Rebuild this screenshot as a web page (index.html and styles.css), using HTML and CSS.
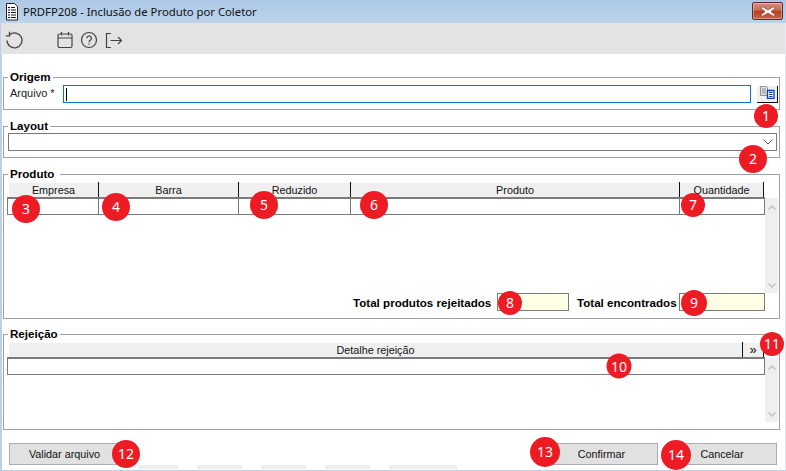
FILE: index.html
```html
<!DOCTYPE html>
<html lang="pt">
<head>
<meta charset="utf-8">
<title>PRDFP208 - Inclusão de Produto por Coletor</title>
<link rel="stylesheet" href="styles.css">
</head>
<body>
<div class="window">
  <header class="titlebar">
    <svg class="doc-icon" width="16" height="18" viewBox="0 0 16 18"><path d="M2.500 .5h8l3 3v13.500h-11z" fill="#fff" stroke="#222"/><path d="M4 4h2v1H4zM7 4h4v1H7zM4 6.500h2v1H4zM7 6.500h5v1H7zM4 9h2v1H4zM7 9h5v1H7zM4 11.500h2v1H4zM7 11.500h5v1H7zM4 14h2v1H4zM7 14h5v1H7z" fill="#111"/></svg>
    <span class="title">PRDFP208 - Inclusão de Produto por Coletor</span>
    <button class="close" aria-label="Fechar"><svg width="16" height="11" viewBox="0 0 16 11"><path d="M2.500 .8 8 3.800 13.500 .8 15.300 2 11 5.500 15.300 9 13.500 10.200 8 7.200 2.500 10.200 .7 9 5 5.500 .7 2z" fill="#f7f3f2" stroke="#7b3a34" stroke-width=".6"/></svg></button>
  </header>
  <nav class="toolbar">
    <svg class="tool tool-undo" width="18" height="18" viewBox="0 0 18 18" fill="none" stroke="#444" stroke-width="1.300"><path d="M4.800 3.500A7.500 7.500 0 1 1 2 9.500"/><path d="M4.500 .8v4H.8"/></svg>
    <svg class="tool tool-cal" width="18" height="18" viewBox="0 0 18 18" fill="none" stroke="#444" stroke-width="1.200"><rect x="2" y="3" width="14" height="13.500" rx="1.500"/><path d="M2 7h14M5.500 1v3.500M12.500 1v3.500"/></svg>
    <svg class="tool tool-help" width="18" height="18" viewBox="0 0 18 18" fill="none" stroke="#444" stroke-width="1.200"><circle cx="9" cy="9" r="7.500"/><path d="M6.800 7.200a2.300 2.300 0 1 1 3.500 2c-.9.500-1.300 1-1.300 2"/><path d="M9 12.500v1.200"/></svg>
    <svg class="tool tool-exit" width="18" height="18" viewBox="0 0 18 18" fill="none" stroke="#444" stroke-width="1.200"><path d="M6 2.500H1.500v14H6"/><path d="M5.500 9.500h11M13 6l3.500 3.500L13 13"/></svg>
  </nav>
  <main class="content">
    <fieldset class="group group-origem">
      <legend>Origem</legend>
      <div class="file-row">
        <label class="file-label">Arquivo *</label>
        <div class="file-input"><span class="caret"></span></div>
        <button class="file-btn" aria-label="Selecionar arquivo">
          <svg width="15" height="13" viewBox="0 0 15 13"><path d="M.5.500h6l1 1v8h-7z" fill="#e4e4e4" stroke="#8f8f8f"/><path d="M2 3h4M2 5h4M2 7h4" stroke="#8f8f8f"/><path d="M7.500 4.500h6.500v8h-6.500z" fill="#fff" stroke="#0b3fc0" stroke-width="1.300"/><path d="M9 6.500h3.500M9 8.500h3.500M9 10.500h3.500" stroke="#0b3fc0"/></svg>
        </button>
      </div>
    </fieldset>
    <fieldset class="group group-layout">
      <legend>Layout</legend>
      <div class="combo"><svg width="10" height="6" viewBox="0 0 10 6" fill="none" stroke="#555"><path d="M.5.500 5 5 9.500.500"/></svg></div>
    </fieldset>
    <fieldset class="group group-produto">
      <legend>Produto</legend>
      <div class="grid-area grid-area-produto">
        <div class="grid">
          <div class="grid-head cols-produto">
            <div>Empresa</div><div>Barra</div><div>Reduzido</div><div>Produto</div><div>Quantidade</div>
          </div>
          <div class="grid-row cols-row">
            <div></div><div></div><div></div><div></div><div></div>
          </div>
        </div>
        <div class="scrollbar">
          <svg width="8" height="5" viewBox="0 0 8 5" fill="none" stroke="#c4c4c4" stroke-width="1.500"><path d="M.5 4.500 4 1l3.500 3.500"/></svg>
          <svg width="8" height="5" viewBox="0 0 8 5" fill="none" stroke="#c4c4c4" stroke-width="1.500"><path d="M.5.500 4 4 7.500.500"/></svg>
        </div>
      </div>
      <div class="totals">
        <strong class="total-label">Total produtos rejeitados</strong>
        <div class="total-box total-box-a"></div>
        <strong class="total-label">Total encontrados</strong>
        <div class="total-box total-box-b"></div>
      </div>
    </fieldset>
    <fieldset class="group group-rejeicao">
      <legend>Rejeição</legend>
      <div class="grid-area grid-area-rejeicao">
        <div class="grid">
          <div class="grid-head cols-rejeicao">
            <div>Detalhe rejeição</div><div class="more">»</div>
          </div>
          <div class="grid-row"></div>
        </div>
        <div class="scrollbar">
          <svg width="8" height="5" viewBox="0 0 8 5" fill="none" stroke="#c4c4c4" stroke-width="1.500"><path d="M.5 4.500 4 1l3.500 3.500"/></svg>
          <svg width="8" height="5" viewBox="0 0 8 5" fill="none" stroke="#c4c4c4" stroke-width="1.500"><path d="M.5.500 4 4 7.500.500"/></svg>
        </div>
      </div>
    </fieldset>
    <footer class="actions">
      <button class="btn btn-validar">Validar arquivo</button>
      <span class="spacer"></span>
      <button class="btn btn-confirmar">Confirmar</button>
      <button class="btn btn-cancelar">Cancelar</button>
    </footer>
    <div class="tabs">
      <span class="tab tab-a"></span><span class="tab tab-b"></span><span class="tab tab-b"></span><span class="tab tab-b"></span><span class="tab tab-c"></span>
    </div>
  </main>
  <span class="badge b1">1</span>
  <span class="badge b2">2</span>
  <span class="badge b3">3</span>
  <span class="badge b4">4</span>
  <span class="badge b5">5</span>
  <span class="badge b6">6</span>
  <span class="badge b7">7</span>
  <span class="badge b8">8</span>
  <span class="badge b9">9</span>
  <span class="badge b10">10</span>
  <span class="badge b11">11</span>
  <span class="badge b12">12</span>
  <span class="badge b13">13</span>
  <span class="badge b14">14</span>
</div>
</body>
</html>
```
FILE: styles.css
```css
* { box-sizing: border-box; }
html, body { margin: 0; padding: 0; background: #fff; overflow: hidden; }
body { font: 11px/13px "Liberation Sans", Arial, sans-serif; color: #111; }
button { font: inherit; color: inherit; margin: 0; }

.window {
  position: relative;
  width: 786px;
  height: 471px;
  display: flex;
  flex-direction: column;
  background: #fff;
  border-bottom: 1px solid #b9d1ea;
}

.titlebar {
  height: 23px;
  flex: none;
  display: flex;
  align-items: center;
  padding: 0 3px;
  background: linear-gradient(#adc8e6, #bcd3ea);
}
.doc-icon { flex: none; margin: 1px 3px 0 1px; }
.title { font: 11.300px/16px "Noto Sans", sans-serif; color: #111; }
.close {
  margin: -1px 0 0 auto;
  width: 31px;
  height: 18px;
  padding: 0;
  display: flex;
  align-items: center;
  justify-content: center;
  border: 1px solid #5a2a2a;
  border-radius: 2px;
  background: linear-gradient(#d98f80 0, #c96a58 45%, #b8401f 50%, #c9614a 100%);
  box-shadow: inset 0 0 0 1px rgba(255,255,255,.35);
}

.toolbar {
  height: 31px;
  flex: none;
  display: flex;
  align-items: center;
  background: #e3e3e3;
  border-left: 1px solid #b9d1ea;
  border-right: 1px solid #e9eef4;
  padding: 3px 0 0 4px;
}
.tool-undo { margin-right: 33px; }
.tool-cal { margin-right: 6px; }
.tool-help { margin-right: 7px; }

.content {
  flex: 1;
  min-height: 0;
  display: flex;
  flex-direction: column;
  padding: 0 5px 0 1px;
  border-left: 2px solid #b9d1ea;
  border-right: 1px solid #dbe6f1;
}

.group {
  margin: 0;
  min-width: 0;
  padding: 0 2px 0 3px;
  border: 1px solid #a0a0a0;
}
.group legend {
  margin-left: 1px;
  padding: 0 2px;
  font-weight: bold;
  font-size: 11.600px;
  line-height: 14px;
  color: #000;
}
.group-origem { height: 40px; margin-top: 16px; }
.group-layout { height: 39px; margin-top: 9px; }
.group-produto { height: 152px; margin-top: 9px; }
.group-rejeicao { height: 103px; margin-top: 8px; }
.group-produto legend { padding-right: 6px; }

.file-row { display: flex; align-items: flex-start; margin-top: 1px; }
.file-label { width: 56px; flex: none; padding: 2px 0 0 3px; color: #222; }
.file-input {
  width: 688px;
  height: 18px;
  flex: none;
  display: flex;
  align-items: center;
  border: 1px solid #0078d7;
  padding-left: 2px;
}
.caret { width: 1px; height: 13px; background: #000; }
.file-btn {
  width: 21px;
  height: 17px;
  margin: 1px 0 0 6px;
  flex: none;
  padding: 0 0 3px 3px;
  display: flex;
  align-items: center;
  background: #f0f0f0;
  border: 0;
  border-right: 1px solid #111;
  border-bottom: 1px solid #111;
}

.combo {
  height: 18px;
  margin-left: 1px;
  display: flex;
  align-items: center;
  justify-content: flex-end;
  padding-right: 3px;
  border: 1px solid #7a7a7a;
}

.grid-area { display: flex; align-items: stretch; }
.grid-area-produto { height: 110px; margin-top: 2px; }
.grid-area-rejeicao { height: 79px; margin-top: 2px; }
.grid { width: 758px; flex: none; }
.grid-head {
  display: grid;
  width: 755px;
  height: 14px;
  margin-left: 2px;
  background: #efefef;
  text-align: center;
  font-size: 10.800px;
  line-height: 16px;
  color: #111;
}
.grid-head > div { border-right: 1px solid #111; margin-top: -1px; height: 15px; }
.cols-produto { grid-template-columns: 90px 140px 112px 329px 84px; }
.cols-rejeicao { grid-template-columns: 734px 21px; }
.grid-head .more { font-size: 13px; }
.grid-row {
  height: 18px;
  border: 1px solid #7a7a7a;
  border-top-width: 2px;
}
.cols-row { display: grid; grid-template-columns: 91px 140px 112px 329px 1fr; }
.cols-row > div { border-right: 1px solid #7a7a7a; }
.cols-row > div:last-child { border-right: 0; }

.scrollbar {
  width: 13px;
  flex: none;
  margin-top: 15px;
  display: flex;
  flex-direction: column;
  justify-content: space-between;
  align-items: center;
  padding: 7px 0 5px;
  background: #efefef;
}

.totals { display: flex; align-items: center; height: 18px; }
.total-label { font-size: 11.600px; white-space: nowrap; color: #000; }
.total-label:first-child { margin-left: 346px; width: 144px; }
.total-label:nth-child(3) { margin-left: 8px; width: 102px; }
.total-box { height: 18px; background: #ffffe6; border: 1px solid #7a7a7a; }
.total-box-a { width: 72px; }
.total-box-b { width: 86px; }

.actions { display: flex; align-items: flex-start; margin-top: 13px; padding-left: 6px; }
.spacer { flex: 1; }
.btn {
  height: 22px;
  padding: 0;
  background: #e1e1e1;
  border: 1px solid #adadad;
  font-size: 10.800px;
  color: #111;
}
.btn-validar { width: 111px; }
.btn-confirmar { width: 113px; margin-right: 9px; }
.btn-cancelar { width: 110px; margin-right: 3px; }

.tabs { display: flex; height: 4px; padding-left: 135px; }
.tab { background: #eeeeee; height: 4px; margin-right: 19px; flex: none; }
.tab-a { width: 40px; }
.tab-b { width: 45px; }
.tab-c { width: 68px; }

.badge {
  position: absolute;
  display: flex;
  align-items: center;
  justify-content: center;
  border-radius: 50%;
  background: #ed1c24;
  color: #fff;
  font: 14px/14px "Noto Sans", sans-serif;
  transform: translate(-50%, -50%);
}
.b1 { left: 766px; top: 116px; width: 24px; height: 24px; }
.b2 { left: 753px; top: 159px; width: 28px; height: 28px; }
.b3 { left: 26px; top: 209px; width: 28px; height: 28px; }
.b4 { left: 116px; top: 207px; width: 28px; height: 28px; }
.b5 { left: 264px; top: 205px; width: 28px; height: 28px; }
.b6 { left: 374px; top: 205px; width: 28px; height: 28px; }
.b7 { left: 693px; top: 205px; width: 24px; height: 24px; }
.b8 { left: 510px; top: 303px; width: 24px; height: 24px; }
.b9 { left: 694px; top: 303px; width: 26px; height: 26px; }
.b10 { left: 619px; top: 366px; width: 25px; height: 25px; }
.b11 { left: 772px; top: 344px; width: 24px; height: 24px; }
.b12 { left: 126px; top: 454px; width: 28px; height: 28px; }
.b13 { left: 545px; top: 452px; width: 30px; height: 30px; }
.b14 { left: 676px; top: 455px; width: 30px; height: 30px; }
```
